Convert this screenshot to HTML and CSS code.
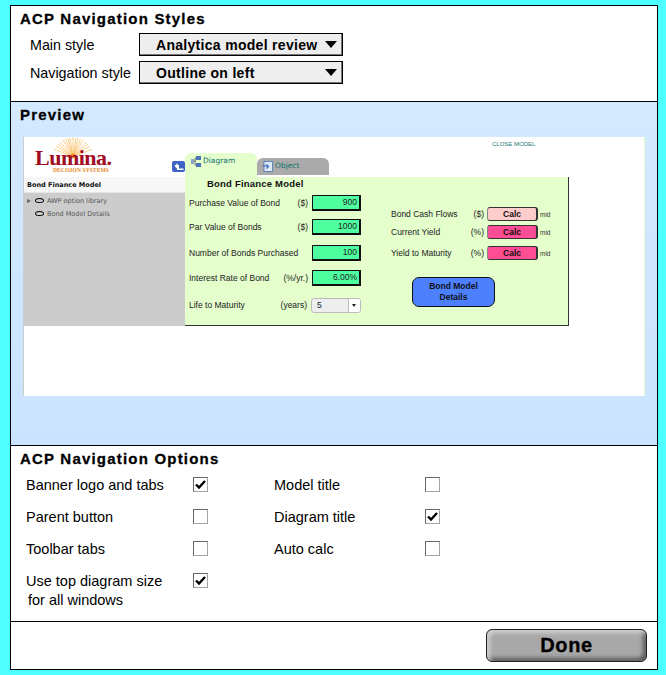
FILE: index.html
```html
<!DOCTYPE html>
<html lang="en">
<head>
<meta charset="utf-8">
<title>ACP Navigation Styles</title>
<link rel="stylesheet" href="styles.css">
</head>
<body>
<main class="window">
  <section class="styles">
    <h2 class="heading">ACP Navigation Styles</h2>
    <div class="style-row">
      <span class="style-label">Main style</span>
      <div class="dropdown"><span>Analytica model review</span><i class="arrow"></i></div>
    </div>
    <div class="style-row">
      <span class="style-label">Navigation style</span>
      <div class="dropdown"><span>Outline on left</span><i class="arrow"></i></div>
    </div>
  </section>

  <section class="preview">
    <h2 class="heading">Preview</h2>
    <div class="shot">
      <div class="banner">
        <div class="logo">
          <svg class="sun" viewBox="0 0 50 30" aria-hidden="true">
            <g stroke="#f7a21e" stroke-width=".7" opacity=".75">
              <path d="M25 20 L25 0 M25 20 L20 1 M25 20 L30 1 M25 20 L15 3 M25 20 L35 3 M25 20 L10 7 M25 20 L40 7 M25 20 L6 12 M25 20 L44 12 M25 20 L22 1 M25 20 L28 1 M25 20 L17.500 2 M25 20 L32.500 2 M25 20 L12 5 M25 20 L38 5 M25 20 L8 9 M25 20 L42 9"/>
            </g>
            <circle cx="25" cy="19" r="2.400" fill="#f7901e"/>
          </svg>
          <span class="lumina">Lumina.</span>
          <span class="decision">DECISION SYSTEMS</span>
        </div>
        <svg class="back" viewBox="0 0 13 11" aria-hidden="true">
          <rect width="13" height="11" rx="2" fill="#3f63c4"/>
          <path d="M2.500 5 L5.500 2 L5.500 4 L7 4 L7 7.500 L11.500 7.500 L11.500 9 L5 9 L5 6 L5.500 6 L5.500 8 Z" fill="#fff"/>
        </svg>
        <div class="tab tab-active">
          <svg class="tab-icon" viewBox="0 0 10 11" aria-hidden="true">
            <rect x="0" y="3" width="3" height="5" fill="#8ba6c8"/>
            <rect x="5" y="0" width="5" height="4" fill="#4c74b8"/>
            <rect x="5" y="7" width="5" height="4" fill="#4c74b8"/>
            <path d="M3 5 H5 M4 2 V9 H5 M4 2 H5" stroke="#333" stroke-width=".6" fill="none"/>
          </svg>
          <span>Diagram</span>
        </div>
        <div class="tab tab-other">
          <svg class="tab-icon" viewBox="0 0 10 11" aria-hidden="true">
            <rect x="1" y="0.500" width="8.500" height="10" fill="#dce9f8" stroke="#4c74b8" stroke-width=".8"/>
            <path d="M0 5 H5 M3.500 3.500 L5.500 5.500 L3.500 7.500" stroke="#2b5fb0" stroke-width="1.100" fill="none"/>
          </svg>
          <span>Object</span>
        </div>
        <span class="close-model">CLOSE MODEL</span>
      </div>
      <div class="model">
        <aside class="outline">
          <div class="outline-title">Bond Finance Model</div>
          <div class="outline-item"><i class="caret"></i><i class="oval"></i><span>AWP option library</span></div>
          <div class="outline-item outline-leaf"><i class="oval"></i><span>Bond Model Details</span></div>
        </aside>
        <div class="diagram">
          <h3 class="diagram-title">Bond Finance Model</h3>
          <div class="columns">
            <div class="inputs">
              <div class="in-row in-1"><span class="in-label">Purchase Value of Bond</span><span>($)</span><b class="field">900</b></div>
              <div class="in-row in-2"><span class="in-label">Par Value of Bonds</span><span>($)</span><b class="field">1000</b></div>
              <div class="in-row in-3"><span class="in-label">Number of Bonds Purchased</span><b class="field">100</b></div>
              <div class="in-row in-4"><span class="in-label">Interest Rate of Bond</span><span>(%/yr.)</span><b class="field">6.00%</b></div>
              <div class="in-row in-5"><span class="in-label">Life to Maturity</span><span>(years)</span>
                <div class="mini-select"><span class="mini-value">5</span><span class="mini-btn"></span></div>
              </div>
            </div>
            <div class="outputs">
              <div class="out-row out-1"><span class="out-label">Bond Cash Flows</span><span>($)</span><b class="calc calc-light">Calc</b><small class="mid">mid</small></div>
              <div class="out-row out-2"><span class="out-label">Current Yield</span><span>(%)</span><b class="calc">Calc</b><small class="mid">mid</small></div>
              <div class="out-row out-3"><span class="out-label">Yield to Maturity</span><span>(%)</span><b class="calc">Calc</b><small class="mid">mid</small></div>
              <div class="details">Bond Model<br>Details</div>
            </div>
          </div>
        </div>
      </div>
    </div>
  </section>

  <section class="options">
    <h2 class="heading">ACP Navigation Options</h2>
    <div class="option-grid">
      <span>Banner logo and tabs</span><i class="check on"></i><span>Model title</span><i class="check"></i>
      <span>Parent button</span><i class="check"></i><span>Diagram title</span><i class="check on"></i>
      <span>Toolbar tabs</span><i class="check"></i><span>Auto calc</span><i class="check"></i>
      <span class="two-line">Use top diagram size<br><span class="indent">for all windows</span></span><i class="check on"></i>
    </div>
  </section>

  <footer class="actions">
    <div class="done">Done</div>
  </footer>
</main>
</body>
</html>
```

FILE: styles.css
```css
* { box-sizing: border-box; }
html, body { margin: 0; height: 100%; }
body {
  background: #4dffff;
  padding: 5px 0 0 10px;
  font-family: "Liberation Sans", Arial, sans-serif;
  color: #000;
  overflow: hidden;
}
.window {
  width: 648px;
  height: 665px;
  background: #fff;
  border: 1px solid #000;
  display: flex;
  flex-direction: column;
}
.heading {
  margin: 0;
  font-size: 15px;
  line-height: 18px;
  font-weight: 700;
  letter-spacing: 1.200px;
  -webkit-text-stroke: .3px #000;
}

/* Styles */
.styles {
  height: 96px;
  border-bottom: 1px solid #000;
  padding: 4px 0 0 9px;
  flex: none;
}
.style-row {
  display: flex;
  align-items: center;
  height: 23px;
  margin-top: 5px;
  padding-left: 10px;
  font-size: 14.300px;
}
.style-label { width: 109px; white-space: nowrap; }
.dropdown {
  width: 204px;
  height: 23px;
  background: #eee;
  border: 1px solid #000;
  box-shadow: inset -1px -1px 0 #777;
  display: flex;
  align-items: center;
  justify-content: space-between;
  padding: 0 5px 0 16px;
  font-weight: 700;
  font-size: 14px;
  letter-spacing: .3px;
}
.arrow {
  width: 0;
  height: 0;
  border-left: 6px solid transparent;
  border-right: 6px solid transparent;
  border-top: 7px solid #000;
}

/* Preview */
.preview {
  height: 344px;
  flex: none;
  background: linear-gradient(#d3e9ff, #cae3ff);
  border-bottom: 1px solid #000;
  padding: 4px 12px 0 9px;
}
.shot {
  margin: 13px 0 0 3px;
  width: 622px;
  height: 259px;
  background: #fff;
  border-left: 1px solid #ccc;
  border-right: 1px solid #e4fbcb;
  font-size: 8.500px;
  color: #222;
}
.banner {
  height: 40px;
  display: flex;
  align-items: flex-end;
}
.logo {
  position: relative;
  width: 80px;
  height: 40px;
  margin-left: 11px;
  flex: none;
}
.sun {
  position: absolute;
  left: 13px;
  top: 0;
  width: 50px;
  height: 30px;
}
.lumina {
  position: absolute;
  left: 0;
  top: 12px;
  font-family: "Liberation Serif", serif;
  font-weight: 700;
  font-size: 22px;
  line-height: 17px;
  color: #a00c22;
  letter-spacing: -.5px;
}
.decision {
  position: absolute;
  left: 18px;
  top: 30px;
  font-family: "Liberation Serif", serif;
  font-weight: 700;
  font-size: 5.500px;
  line-height: 6px;
  white-space: nowrap;
  color: #e8861a;
  letter-spacing: .1px;
}
.back {
  width: 13px;
  height: 11px;
  margin: 0 0 5px 57px;
  flex: none;
}
.tab {
  display: flex;
  align-items: flex-start;
  gap: 2px;
  flex: none;
  color: #0f6f6c;
  font-family: "DejaVu Sans", sans-serif;
  border-radius: 6px 6px 0 0;
}
.tab-active {
  width: 72px;
  height: 24px;
  font-size: 7.500px;
  background: #e4fecc;
  padding: 3px 0 0 6px;
}
.tab-other {
  width: 72px;
  height: 17px;
  font-size: 7.500px;
  background: #aaa;
  padding: 3px 0 0 6px;
  margin-bottom: 2px;
}
.tab-icon { width: 10px; height: 11px; flex: none; }
.close-model {
  align-self: flex-start;
  margin: 4px 0 0 163px;
  font-size: 6px;
  color: #1b7a78;
  white-space: nowrap;
}
.model {
  display: flex;
  width: 545px;
  height: 149px;
}
.outline {
  width: 161px;
  flex: none;
  background: #ccc;
  font-family: "DejaVu Sans", sans-serif;
  font-size: 6.500px;
  color: #555;
}
.outline-title {
  height: 16px;
  line-height: 16px;
  background: #f7f7f7;
  border-bottom: 1px solid #e6e6e6;
  padding-left: 3px;
  color: #111;
  font-weight: 700;
}
.outline-item {
  display: flex;
  align-items: center;
  height: 13px;
  margin-top: 1px;
  padding-left: 3px;
  gap: 3px;
}
.outline-leaf { margin-top: 0; padding-left: 11px; }
.caret {
  width: 0;
  height: 0;
  border-left: 4px solid #666;
  border-top: 2.500px solid transparent;
  border-bottom: 2.500px solid transparent;
  margin-right: 1px;
}
.oval {
  width: 9px;
  height: 5px;
  border: 1.200px solid #000;
  border-radius: 50%;
}
.diagram {
  flex: 1;
  background: #e4fecc;
  border-right: 1px solid #333;
  border-bottom: 1px solid #333;
  padding: 0 0 0 4px;
}
.diagram-title {
  margin: 0 0 0 18px;
  height: 18px;
  line-height: 14px;
  font-size: 9.500px;
  font-weight: 700;
  color: #111;
  letter-spacing: .2px;
}
.columns { display: flex; }
.inputs { width: 172px; flex: none; }
.in-row {
  display: flex;
  align-items: center;
  gap: 4px;
  height: 16px;
}
.in-2 { margin-top: 8px; }
.in-3 { margin-top: 10px; }
.in-4 { margin-top: 9px; }
.in-5 { margin-top: 11px; }
.in-label { flex: 1; white-space: nowrap; }
.field {
  width: 49px;
  height: 16px;
  background: #4dff9f;
  border: 1px solid #111;
  border-right-width: 2px;
  border-bottom-width: 2px;
  text-align: right;
  padding-right: 2px;
  line-height: 13px;
  font-weight: 400;
}
.mini-select {
  width: 50px;
  height: 15px;
  display: flex;
  background: #eee;
  border: 1px solid #bbb;
  border-radius: 3px;
  overflow: hidden;
}
.mini-value { flex: 1; padding-left: 5px; line-height: 13px; color: #123; }
.mini-btn {
  width: 12px;
  background: #fff;
  border-left: 1px solid #bbb;
  position: relative;
}
.mini-btn::after {
  content: "";
  position: absolute;
  left: 3px;
  top: 5px;
  border-left: 2.500px solid transparent;
  border-right: 2.500px solid transparent;
  border-top: 3px solid #222;
}
.outputs { margin-left: 30px; width: 161px; padding-top: 12px; flex: none; }
.out-row {
  display: flex;
  align-items: center;
  height: 14px;
  gap: 3px;
}
.out-2 { margin-top: 4px; }
.out-3 { margin-top: 7px; }
.out-label { flex: 1; white-space: nowrap; }
.calc {
  width: 51px;
  height: 14px;
  background: #ff4d94;
  border: 1px solid #333;
  border-right-width: 2px;
  border-left-color: #888;
  border-radius: 3px;
  text-align: center;
  line-height: 12px;
  font-size: 8.500px;
  font-weight: 700;
  color: #111;
}
.calc-light { background: #ffcccc; }
.mid { width: 12px; font-size: 6.500px; color: #333; margin-left: -1px; }
.details {
  width: 83px;
  height: 30px;
  margin: 17px 0 0 21px;
  background: #4d80ff;
  border: 1.500px solid #111;
  border-radius: 7px;
  text-align: center;
  font-size: 8.500px;
  line-height: 11px;
  font-weight: 700;
  padding-top: 3px;
  color: #111;
}

/* Options */
.options {
  height: 176px;
  flex: none;
  border-bottom: 1px solid #000;
  padding: 4px 0 0 9px;
}
.option-grid {
  display: grid;
  grid-template-columns: 167px 81px 151px 15px;
  grid-auto-rows: 32px;
  align-items: start;
  margin-top: 8px;
  padding-left: 6px;
  font-size: 14.500px;
  line-height: 19px;
}
.indent { padding-left: 2px; }
.check {
  display: block;
  width: 15px;
  height: 15px;
  margin-top: 1px;
  border: 1px solid #a5a5a5;
  border-top-color: #666;
  border-left-color: #666;
  background: #fff center / 11px 11px no-repeat;
}
.check.on {
  background-image: url("data:image/svg+xml,%3Csvg xmlns='http://www.w3.org/2000/svg' viewBox='0 0 11 11'%3E%3Cpath d='M1 5.500 L4 8.500 L10 2' fill='none' stroke='%23000' stroke-width='2.400'/%3E%3C/svg%3E");
}

/* Footer */
.actions {
  flex: 1;
  display: flex;
  justify-content: flex-end;
  align-items: flex-start;
  padding: 7px 10px 0 0;
}
.done {
  width: 161px;
  height: 33px;
  border: 1px solid #222;
  border-radius: 6px;
  background: #a8a8a8;
  box-shadow: inset 3px 3px 4px #cfcfcf, inset -3px -3px 4px #5a5a5a;
  text-align: center;
  font-size: 20px;
  line-height: 31px;
  font-weight: 700;
  letter-spacing: .6px;
  -webkit-text-stroke: .3px #000;
}
```
